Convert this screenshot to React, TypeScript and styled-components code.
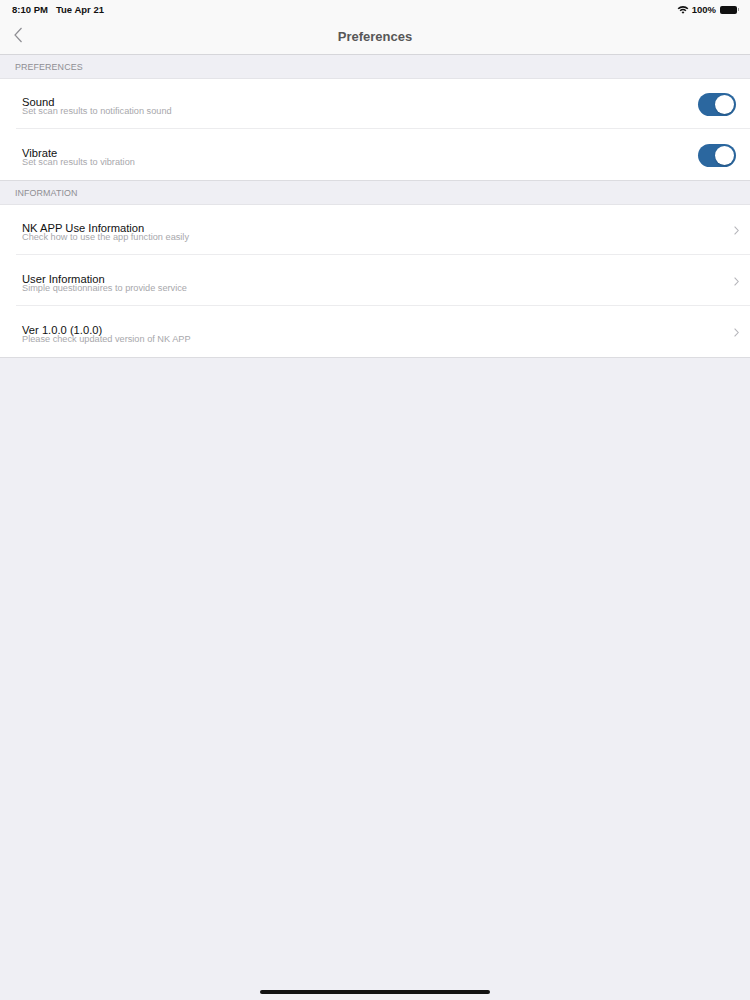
import styled, { createGlobalStyle } from "styled-components";

const GlobalStyle = createGlobalStyle`
    html, body {
        margin: 0;
        padding: 0;
        background: #efeff4;
    }
    body {
        font-family: "Liberation Sans", Arial, sans-serif;
        -webkit-font-smoothing: antialiased;
    }
`;

const Screen = styled.div`
    width: 750px;
    height: 1000px;
    background: #efeff4;
    display: flex;
    flex-direction: column;
    position: relative;
    overflow: hidden;
`;

const TopBar = styled.div`
    background: #f9f9f9;
    border-bottom: 1px solid #d6d6da;
`;

const StatusBar = styled.div`
    height: 19px;
    padding: 0 12px 0 12px;
    display: flex;
    align-items: center;
    justify-content: space-between;
    font-size: 9.5px;
    font-weight: bold;
    color: #111;
`;

const StatusLeft = styled.div`
    display: flex;
    gap: 8px;
`;

const StatusRight = styled.div`
    display: flex;
    align-items: center;
    gap: 3px;
`;

const Battery = styled.div`
    width: 17px;
    height: 8px;
    border-radius: 2px;
    background: #111;
    margin-left: 1px;
    margin-right: 1px;
    position: relative;
    &::after {
        content: "";
        position: absolute;
        right: -2px;
        top: 2.5px;
        width: 1px;
        height: 3px;
        background: #999;
    }
`;

const NavBar = styled.div`
    height: 35px;
    display: flex;
    align-items: center;
    justify-content: center;
    position: relative;
`;

const BackButton = styled.div`
    position: absolute;
    left: 13px;
    top: 8px;
    display: flex;
`;

const NavTitle = styled.div`
    font-size: 13px;
    font-weight: bold;
    color: #575757;
    margin-top: -1px;
`;

const SectionHeader = styled.div`
    height: 23px;
    padding: 0 15px;
    display: flex;
    align-items: center;
    font-size: 8.9px;
    color: #8e8e93;
    letter-spacing: 0.1px;
    border-bottom: 1px solid #e4e4e8;
`;

const Group = styled.div`
    background: #fff;
    border-bottom: 1px solid #dcdce0;
`;

const Row = styled.div<{ $last?: boolean }>`
    height: 50px;
    display: flex;
    align-items: center;
    padding-left: 22px;
    padding-right: 14px;
    position: relative;
    &::after {
        content: "";
        display: ${p => (p.$last ? "none" : "block")};
        position: absolute;
        left: 16px;
        right: 0;
        bottom: 0;
        height: 1px;
        background: #ececee;
    }
    margin-bottom: ${p => (p.$last ? "0" : "1px")};
`;

const TextBlock = styled.div`
    flex: 1;
    display: flex;
    flex-direction: column;
    padding-top: 4px;
`;

const Title = styled.div`
    font-size: 11.2px;
    line-height: 10px;
    color: #111;
`;

const Subtitle = styled.div`
    font-size: 9.2px;
    line-height: 9px;
    color: #a8a8ac;
`;

const Toggle = styled.div<{ $on: boolean }>`
    width: 38px;
    height: 23px;
    border-radius: 12px;
    background: ${p => (p.$on ? "#2b679f" : "#e5e5ea")};
    position: relative;
    &::after {
        content: "";
        position: absolute;
        top: 2px;
        left: ${p => (p.$on ? "17px" : "2px")};
        width: 19px;
        height: 19px;
        border-radius: 50%;
        background: #fff;
        box-shadow: 0 1px 2px rgba(0, 0, 0, 0.2);
    }
`;

const Chevron = styled.div`
    display: flex;
    margin-right: -3px;
`;

const HomeIndicator = styled.div`
    position: absolute;
    bottom: 6px;
    left: 260px;
    width: 230px;
    height: 4px;
    border-radius: 3px;
    background: #111;
`;

const toggles = [
    { title: "Sound", sub: "Set scan results to notification sound" },
    { title: "Vibrate", sub: "Set scan results to vibration" },
];

const links = [
    { title: "NK APP Use Information", sub: "Check how to use the app function easily" },
    { title: "User Information", sub: "Simple questionnaires to provide service" },
    { title: "Ver 1.0.0 (1.0.0)", sub: "Please check updated version of NK APP" },
];

function App() {
    return (
        <Screen>
            <GlobalStyle />
            <TopBar>
                <StatusBar>
                    <StatusLeft>
                        <span>8:10 PM</span>
                        <span>Tue Apr 21</span>
                    </StatusLeft>
                    <StatusRight>
                        <svg width="12" height="9" viewBox="0 0 12 9">
                            <path d="M0.6 3.2 A8 8 0 0 1 11.4 3.2 L10.3 4.3 A6.4 6.4 0 0 0 1.7 4.3 Z" fill="#111" />
                            <path d="M2.6 5.2 A5.2 5.2 0 0 1 9.4 5.2 L8.3 6.3 A3.6 3.6 0 0 0 3.7 6.3 Z" fill="#111" />
                            <path d="M4.6 7.2 A2.2 2.2 0 0 1 7.4 7.2 L6 8.7 Z" fill="#111" />
                        </svg>
                        <span>100%</span>
                        <Battery />
                    </StatusRight>
                </StatusBar>
                <NavBar>
                    <BackButton>
                        <svg width="10" height="16" viewBox="0 0 10 16">
                            <path d="M8.5 1 L2 8 L8.5 15" stroke="#8e8e93" strokeWidth="1.2" fill="none" />
                        </svg>
                    </BackButton>
                    <NavTitle>Preferences</NavTitle>
                </NavBar>
            </TopBar>

            <SectionHeader>PREFERENCES</SectionHeader>
            <Group>
                {toggles.map((t, i) => (
                    <Row key={t.title} $last={i === toggles.length - 1}>
                        <TextBlock>
                            <Title>{t.title}</Title>
                            <Subtitle>{t.sub}</Subtitle>
                        </TextBlock>
                        <Toggle $on />
                    </Row>
                ))}
            </Group>

            <SectionHeader>INFORMATION</SectionHeader>
            <Group>
                {links.map((l, i) => (
                    <Row key={l.title} $last={i === links.length - 1}>
                        <TextBlock>
                            <Title>{l.title}</Title>
                            <Subtitle>{l.sub}</Subtitle>
                        </TextBlock>
                        <Chevron>
                            <svg width="5" height="9" viewBox="0 0 5 9">
                                <path d="M0.6 0.6 L4.2 4.5 L0.6 8.4" stroke="#b5b5ba" strokeWidth="1.1" fill="none" />
                            </svg>
                        </Chevron>
                    </Row>
                ))}
            </Group>

            <HomeIndicator />
        </Screen>
    );
}

export default App;
